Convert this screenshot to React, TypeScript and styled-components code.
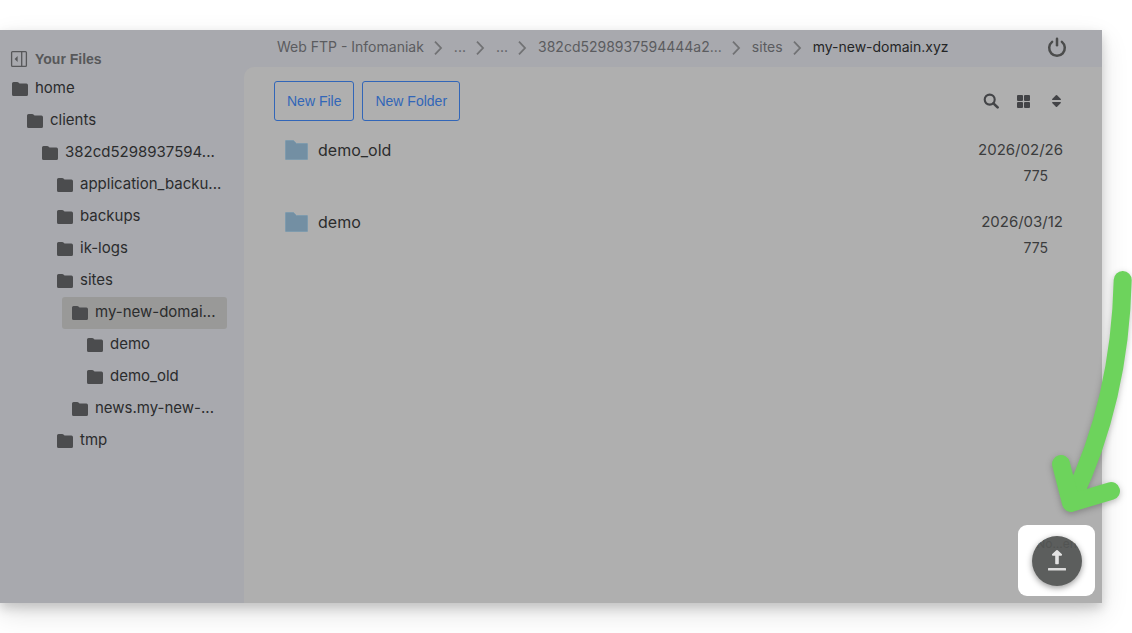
import React from "react";
import styled, { createGlobalStyle } from "styled-components";

const Global = createGlobalStyle`
  * { box-sizing: border-box; }
  body {
    margin: 0;
    background: #ffffff;
    font-family: Inter, "Liberation Sans", sans-serif;
    color: #2b2c2d;
  }
  button { font-family: inherit; cursor: pointer; }
  ul, ol { list-style: none; margin: 0; padding: 0; }
`;

const Page = styled.div`
  position: relative;
  display: flex;
  min-height: 100vh;
  padding: 30px 30px 30px 0;
  overflow: hidden;
`;

const Window = styled.div`
  position: relative;
  display: flex;
  flex: 1;
  min-width: 0;
  background: #a8a9ae;
  box-shadow: 0 5px 10px rgba(0, 0, 0, 0.16), 0 10px 26px rgba(0, 0, 0, 0.12);
`;

const Sidebar = styled.nav`
  flex: 0 0 244px;
  min-width: 0;
  padding: 19px 17px 16px 2px;
`;

const SidebarTitle = styled.h2`
  display: flex;
  align-items: center;
  gap: 7px;
  height: 20px;
  margin: 0 0 4px;
  padding-left: 8px;
  font-family: "Liberation Sans", Arial, sans-serif;
  font-size: 14px;
  font-weight: 700;
  color: #57585a;
`;

const TreeRow = styled.a<{ $level: number; $active?: boolean }>`
  display: flex;
  align-items: center;
  gap: 7px;
  height: 32px;
  margin-left: ${(p) => p.$level * 15}px;
  padding: 0 0 2px 10px;
  border-radius: 3px;
  background: ${(p) => (p.$active ? "#999998" : "transparent")};
  font-size: 15px;
  line-height: 20px;
  color: #2b2c2d;
  text-decoration: none;
  white-space: nowrap;

  svg { flex: none; margin-top: 2px; }
`;

const Main = styled.div`
  display: flex;
  flex: 1;
  flex-direction: column;
  min-width: 0;
`;

const TopBar = styled.header`
  display: flex;
  align-items: center;
  justify-content: space-between;
  height: 37px;
  padding: 0 35px 3px 33px;
`;

const Crumbs = styled.ol`
  display: flex;
  align-items: center;
`;

const Crumb = styled.li`
  display: flex;
  align-items: center;
  font-size: 14px;
  line-height: 20px;
  white-space: nowrap;

  svg { margin: 2px 11px 0 9px; }
`;

const CrumbLink = styled.a<{ $current?: boolean }>`
  color: ${(p) => (p.$current ? "#242526" : "#5b5c5f")};
  text-decoration: none;
`;

const IconButton = styled.button`
  display: flex;
  align-items: center;
  justify-content: center;
  width: 21px;
  height: 21px;
  padding: 0;
  border: 0;
  background: none;
  color: #434447;
`;

const Panel = styled.main`
  flex: 1;
  padding: 14px 35px 16px 30px;
  border-top-left-radius: 10px;
  background: #afafaf;
`;

const Toolbar = styled.div`
  display: flex;
  align-items: center;
  justify-content: space-between;
`;

const ButtonGroup = styled.div<{ $gap: number }>`
  display: flex;
  align-items: center;
  gap: ${(p) => p.$gap}px;
`;

const OutlineButton = styled.button`
  height: 40px;
  padding: 0 12px;
  border: 1px solid #3266b8;
  border-radius: 3px;
  background: none;
  font-family: "Liberation Sans", Arial, sans-serif;
  font-size: 14px;
  color: #3266b8;
`;

const FileList = styled.ul`
  padding: 16px 4px 0 11px;
`;

const FileRow = styled.li`
  display: flex;
  justify-content: space-between;
  height: 72px;
`;

const FileName = styled.a`
  display: flex;
  align-items: center;
  gap: 10px;
  height: 26px;
  font-size: 16px;
  color: #2b2c2d;
  text-decoration: none;
`;

const FileMeta = styled.div`
  display: flex;
  flex-direction: column;
  align-items: flex-end;
  font-size: 15px;
  line-height: 26px;
  color: #3b3c3d;
`;

const Permissions = styled.span`
  padding-right: 15px;
  font-size: 14px;
`;

const Spotlight = styled.div`
  position: absolute;
  right: 7px;
  bottom: 7px;
  display: flex;
  justify-content: center;
  width: 77px;
  height: 71px;
  padding-top: 11px;
  border-radius: 9px;
  background: #ffffff;
`;

const UploadButton = styled.button`
  position: relative;
  width: 50px;
  height: 50px;
  padding: 0;
  overflow: hidden;
  border: 0;
  border-radius: 50%;
  background: #5c5e5d;
  box-shadow: 0 2px 6px rgba(0, 0, 0, 0.4);
`;

const UploadHint = styled.span`
  position: absolute;
  top: 0;
  left: 0;
  width: 100%;
  font-size: 12px;
  line-height: 16px;
  text-align: center;
  color: #525453;
`;

const Arrow = styled.svg`
  position: absolute;
  right: 0;
  top: 260px;
  filter: drop-shadow(0 2px 3px rgba(0, 0, 0, 0.25));
  pointer-events: none;
`;

const TreeFolder = () => (
  <svg width="16" height="14" viewBox="0 0 16 14" fill="#4b4c4e" aria-hidden="true">
    <path d="M0 1.6Q0 0 1.6 0H5.2Q6 0 6.5.6L7.5 1.6H14.4Q16 1.6 16 3.2V12.4Q16 14 14.4 14H1.6Q0 14 0 12.4Z" />
  </svg>
);

const ListFolder = () => (
  <svg width="23" height="20" viewBox="0 0 23 20" aria-hidden="true">
    <path d="M.5 1Q.5.5 1 .5H8.5L11.5 3.5H22Q22.5 3.5 22.5 4V19Q22.5 19.5 22 19.5H1Q.5 19.5 .5 19Z" fill="#738fa3" stroke="#7f9bad" />
  </svg>
);

const Chevron = () => (
  <svg width="10" height="14" viewBox="0 0 10 14" fill="none" stroke="#717274" strokeWidth="1.8" aria-hidden="true">
    <path d="M2 .7L8 7L2 13.3" />
  </svg>
);

const tree = [
  { name: "home", level: 0 },
  { name: "clients", level: 1 },
  { name: "382cd5298937594...", level: 2 },
  { name: "application_backu...", level: 3 },
  { name: "backups", level: 3 },
  { name: "ik-logs", level: 3 },
  { name: "sites", level: 3 },
  { name: "my-new-domai...", level: 4, active: true },
  { name: "demo", level: 5 },
  { name: "demo_old", level: 5 },
  { name: "news.my-new-...", level: 4 },
  { name: "tmp", level: 3 },
];

const crumbs = ["Web FTP - Infomaniak", "...", "...", "382cd5298937594444a2...", "sites", "my-new-domain.xyz"];

const files = [
  { name: "demo_old", date: "2026/02/26", mode: "775" },
  { name: "demo", date: "2026/03/12", mode: "775" },
];

export default function App() {
  return (
    <Page>
      <Global />
      <Window>
        <Sidebar aria-label="Folders">
          <SidebarTitle>
            <svg width="18" height="18" viewBox="0 0 18 18" fill="none" stroke="#57585a" strokeWidth="1.3" aria-hidden="true">
              <rect x="1.6" y="1.6" width="14.8" height="14.8" rx="1" />
              <path d="M11.7 1.6V16.4" />
              <path d="M7.6 6V12L4.6 9Z" fill="#57585a" stroke="none" />
            </svg>
            Your Files
          </SidebarTitle>
          <ul>
            {tree.map((node) => (
              <li key={node.name + node.level}>
                <TreeRow href="#" $level={node.level} $active={node.active}>
                  <TreeFolder />
                  {node.name}
                </TreeRow>
              </li>
            ))}
          </ul>
        </Sidebar>
        <Main>
          <TopBar>
            <Crumbs aria-label="Breadcrumb">
              {crumbs.map((label, i) => (
                <Crumb key={i}>
                  <CrumbLink href="#" $current={i === crumbs.length - 1}>{label}</CrumbLink>
                  {i < crumbs.length - 1 && <Chevron />}
                </Crumb>
              ))}
            </Crumbs>
            <IconButton aria-label="Log out">
              <svg width="20" height="21" viewBox="0 0 20 21" fill="none" stroke="#4b4c4c" strokeWidth="2.5" strokeLinecap="round" aria-hidden="true">
                <path d="M5.1 4.9A7.8 7.8 0 1 0 14.9 4.9" />
                <path d="M10 1.7V8.2" />
              </svg>
            </IconButton>
          </TopBar>
          <Panel>
            <Toolbar>
              <ButtonGroup $gap={8}>
                <OutlineButton>New File</OutlineButton>
                <OutlineButton>New Folder</OutlineButton>
              </ButtonGroup>
              <ButtonGroup $gap={12}>
                <IconButton aria-label="Search">
                  <svg width="16" height="16" viewBox="0 0 16 16" fill="none" stroke="currentColor" aria-hidden="true">
                    <circle cx="6.7" cy="6.6" r="5" strokeWidth="2.1" />
                    <path d="M10.4 10.4L14.6 14.4" strokeWidth="2.6" strokeLinecap="round" />
                  </svg>
                </IconButton>
                <IconButton aria-label="Grid view">
                  <svg width="13" height="13" viewBox="0 0 13 13" fill="currentColor" aria-hidden="true">
                    <rect width="6" height="6" rx="1" />
                    <rect x="7" width="6" height="6" rx="1" />
                    <rect y="7" width="6" height="6" rx="1" />
                    <rect x="7" y="7" width="6" height="6" rx="1" />
                  </svg>
                </IconButton>
                <IconButton aria-label="Sort">
                  <svg width="9" height="12" viewBox="0 0 9 12" fill="currentColor" aria-hidden="true">
                    <path d="M3.9.3Q4.5-.2 5.1.3L8.8 4Q9.2 5 8.2 5H.8Q-.2 5 .2 4Z" />
                    <path d="M3.9 11.7Q4.5 12.2 5.1 11.7L8.8 8Q9.2 7 8.2 7H.8Q-.2 7 .2 8Z" />
                  </svg>
                </IconButton>
              </ButtonGroup>
            </Toolbar>
            <FileList>
              {files.map((file) => (
                <FileRow key={file.name}>
                  <FileName href="#">
                    <ListFolder />
                    {file.name}
                  </FileName>
                  <FileMeta>
                    <span>{file.date}</span>
                    <Permissions>{file.mode}</Permissions>
                  </FileMeta>
                </FileRow>
              ))}
            </FileList>
          </Panel>
        </Main>
        <Spotlight>
          <UploadButton aria-label="Upload">
            <UploadHint aria-hidden="true">No...en</UploadHint>
            <svg width="50" height="50" viewBox="0 0 50 50" aria-hidden="true">
              <path d="M24.3 14.3Q25 13.7 25.7 14.3L30 18.3Q30.4 19.6 29.2 19.8H26.8V27.5Q26.8 28.3 26 28.3H24Q23.2 28.3 23.2 27.5V19.8H20.8Q19.6 19.6 20 18.3Z" fill="#e3e3e3" />
              <rect x="16" y="32" width="18" height="2.6" rx=".6" fill="#dcdcdc" />
            </svg>
          </UploadButton>
        </Spotlight>
      </Window>
      <Arrow width="100" height="260" viewBox="0 0 100 260" fill="none" stroke="#6dd35c" strokeWidth="18" strokeLinecap="round" strokeLinejoin="round" aria-hidden="true">
        <path d="M90.7 20Q88 140 40 240" />
        <path d="M29 204L39 243L79 231" />
      </Arrow>
    </Page>
  );
}
